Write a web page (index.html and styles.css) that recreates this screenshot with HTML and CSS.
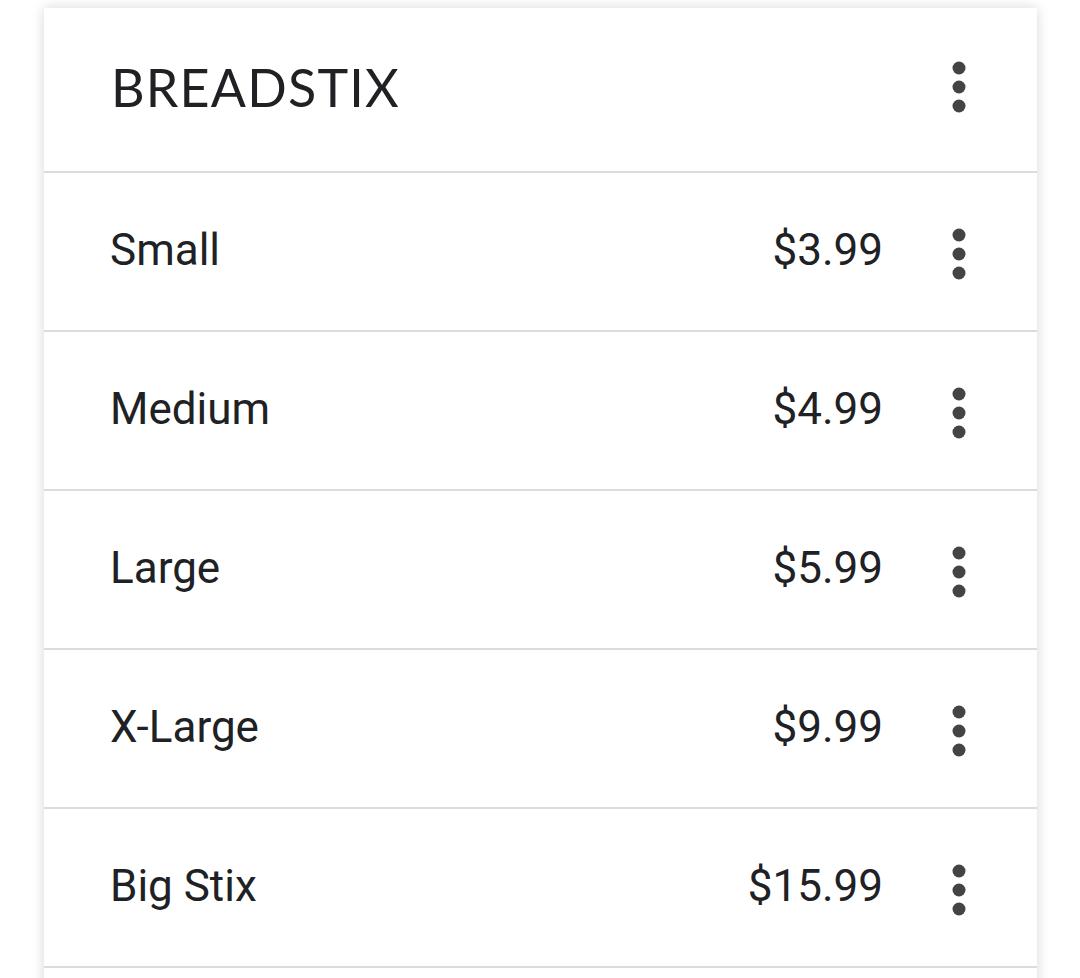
FILE: index.html
```html
<!DOCTYPE html>
<html lang="en">
<head>
    <meta charset="UTF-8">
    <meta name="viewport" content="width=device-width, initial-scale=1.0">
    <title>Breadstix</title>
    <link rel="stylesheet" href="styles.css">
</head>
<body>

<div class="page">
    <div class="card">
        <div class="card-header">
            <h1 class="title">BREADSTIX</h1>
            <button class="more" aria-label="More">
                <svg viewBox="0 0 14 52" width="14" height="52"><circle cx="7" cy="7" r="6.5"/><circle cx="7" cy="26" r="6.5"/><circle cx="7" cy="45" r="6.5"/></svg>
            </button>
        </div>

        <div class="item">
            <span class="name">Small</span>
            <span class="price">$3.99</span>
            <button class="more" aria-label="More">
                <svg viewBox="0 0 14 52" width="14" height="52"><circle cx="7" cy="7" r="6.5"/><circle cx="7" cy="26" r="6.5"/><circle cx="7" cy="45" r="6.5"/></svg>
            </button>
        </div>
        <div class="item">
            <span class="name">Medium</span>
            <span class="price">$4.99</span>
            <button class="more" aria-label="More">
                <svg viewBox="0 0 14 52" width="14" height="52"><circle cx="7" cy="7" r="6.5"/><circle cx="7" cy="26" r="6.5"/><circle cx="7" cy="45" r="6.5"/></svg>
            </button>
        </div>
        <div class="item">
            <span class="name">Large</span>
            <span class="price">$5.99</span>
            <button class="more" aria-label="More">
                <svg viewBox="0 0 14 52" width="14" height="52"><circle cx="7" cy="7" r="6.5"/><circle cx="7" cy="26" r="6.5"/><circle cx="7" cy="45" r="6.5"/></svg>
            </button>
        </div>
        <div class="item">
            <span class="name">X-Large</span>
            <span class="price">$9.99</span>
            <button class="more" aria-label="More">
                <svg viewBox="0 0 14 52" width="14" height="52"><circle cx="7" cy="7" r="6.5"/><circle cx="7" cy="26" r="6.5"/><circle cx="7" cy="45" r="6.5"/></svg>
            </button>
        </div>
        <div class="item">
            <span class="name">Big Stix</span>
            <span class="price">$15.99</span>
            <button class="more" aria-label="More">
                <svg viewBox="0 0 14 52" width="14" height="52"><circle cx="7" cy="7" r="6.5"/><circle cx="7" cy="26" r="6.5"/><circle cx="7" cy="45" r="6.5"/></svg>
            </button>
        </div>
        <div class="item"></div>
    </div>
</div>

</body>
</html>
```

FILE: styles.css
```css
body {
    margin: 0;
    background-color: #fff;
    font-family: Roboto, "Liberation Sans", sans-serif;
    color: #202124;
    overflow: hidden;
}
.page {
    padding: 8px 43px 0 44px;
}
.card {
    background-color: #fff;
    box-shadow: 0 0 12px rgba(0, 0, 0, 0.16);
}
.card-header {
    display: flex;
    align-items: center;
    height: 157px;
    padding: 0 54px 6px 67px;
    border-bottom: 2px solid #dadce0;
}
.title {
    flex: 1;
    margin: 0;
    font-family: Lato, sans-serif;
    font-size: 52px;
    font-weight: 400;
    letter-spacing: 1.2px;
}
.item {
    display: flex;
    align-items: center;
    height: 154px;
    padding: 0 54px 3px 66px;
    border-bottom: 2px solid #dcdcdc;
}
.name {
    flex: 1;
    font-size: 44px;
}
.price {
    font-size: 44px;
    margin-right: 52px;
}
.more {
    width: 48px;
    height: 56px;
    padding: 0;
    border: none;
    background: none;
    display: flex;
    align-items: center;
    justify-content: center;
    fill: #444;
}
.item .more {
    margin-top: 8px;
}
```
